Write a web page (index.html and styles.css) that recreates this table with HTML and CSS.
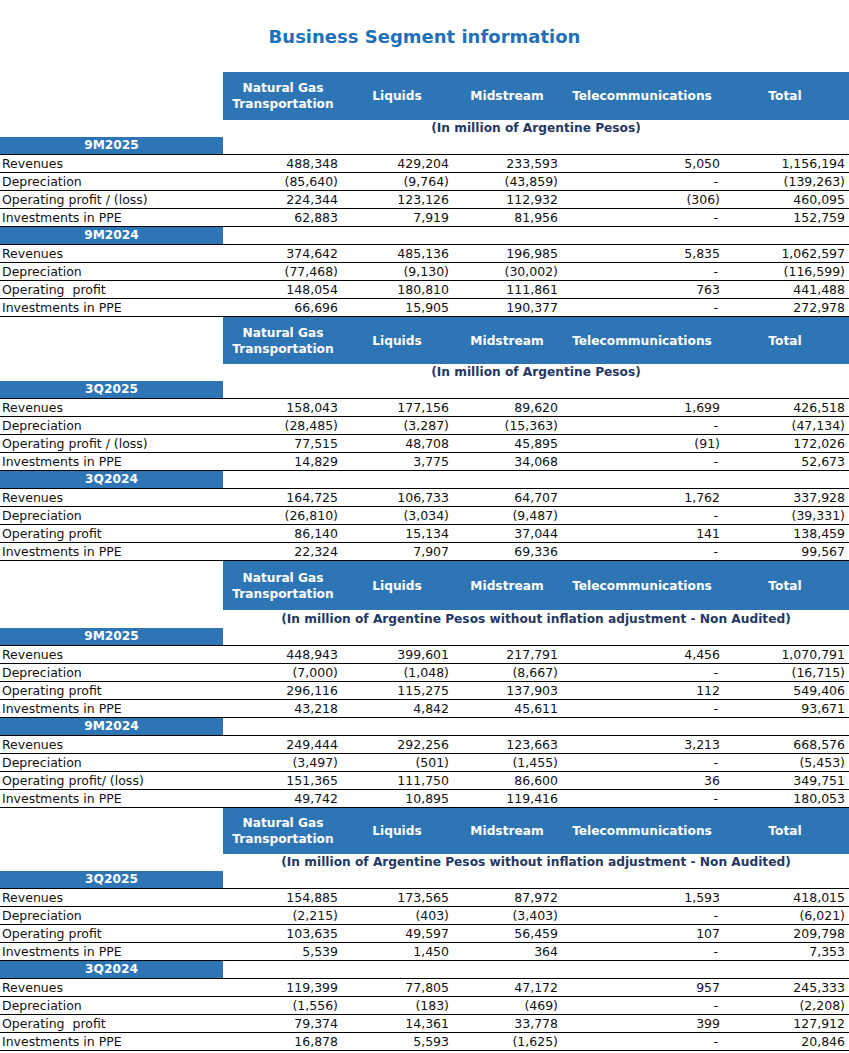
FILE: index.html
```html
<!DOCTYPE html>
<html lang="en">

<head>
    <meta charset="UTF-8">
    <meta name="viewport" content="width=device-width, initial-scale=1.0">
    <title>Business Segment information</title>
    <link rel="stylesheet" href="styles.css">
</head>

<body>
    <h1 class="page-title">Business Segment information</h1>

    <!-- 9M, adjusted -->
    <table class="segment head-48">
        <colgroup>
            <col class="c-name"><col class="c-gas"><col class="c-liq"><col class="c-mid"><col class="c-tel"><col class="c-tot">
        </colgroup>
        <tr class="head">
            <th class="blank"></th>
            <th>Natural Gas<br>Transportation</th>
            <th>Liquids</th>
            <th>Midstream</th>
            <th>Telecommunications</th>
            <th>Total</th>
        </tr>
        <tr class="unit">
            <td></td>
            <td colspan="5">(In million of Argentine Pesos)</td>
        </tr>
        <tr class="period">
            <td class="band">9M2025</td><td></td><td></td><td></td><td></td><td></td>
        </tr>
        <tr class="data"><td class="name">Revenues</td><td>488,348</td><td>429,204</td><td>233,593</td><td>5,050</td><td>1,156,194</td></tr>
        <tr class="data"><td class="name">Depreciation</td><td>(85,640)</td><td>(9,764)</td><td>(43,859)</td><td class="nil">-</td><td>(139,263)</td></tr>
        <tr class="data"><td class="name">Operating profit / (loss)</td><td>224,344</td><td>123,126</td><td>112,932</td><td>(306)</td><td>460,095</td></tr>
        <tr class="data"><td class="name">Investments in PPE</td><td>62,883</td><td>7,919</td><td>81,956</td><td class="nil">-</td><td>152,759</td></tr>
        <tr class="period">
            <td class="band">9M2024</td><td></td><td></td><td></td><td></td><td></td>
        </tr>
        <tr class="data"><td class="name">Revenues</td><td>374,642</td><td>485,136</td><td>196,985</td><td>5,835</td><td>1,062,597</td></tr>
        <tr class="data"><td class="name">Depreciation</td><td>(77,468)</td><td>(9,130)</td><td>(30,002)</td><td class="nil">-</td><td>(116,599)</td></tr>
        <tr class="data"><td class="name">Operating&nbsp; profit</td><td>148,054</td><td>180,810</td><td>111,861</td><td>763</td><td>441,488</td></tr>
        <tr class="data"><td class="name">Investments in PPE</td><td>66,696</td><td>15,905</td><td>190,377</td><td class="nil">-</td><td>272,978</td></tr>
    </table>

    <!-- 3Q, adjusted -->
    <table class="segment head-47">
        <colgroup>
            <col class="c-name"><col class="c-gas"><col class="c-liq"><col class="c-mid"><col class="c-tel"><col class="c-tot">
        </colgroup>
        <tr class="head">
            <th class="blank"></th>
            <th>Natural Gas<br>Transportation</th>
            <th>Liquids</th>
            <th>Midstream</th>
            <th>Telecommunications</th>
            <th>Total</th>
        </tr>
        <tr class="unit">
            <td></td>
            <td colspan="5">(In million of Argentine Pesos)</td>
        </tr>
        <tr class="period">
            <td class="band">3Q2025</td><td></td><td></td><td></td><td></td><td></td>
        </tr>
        <tr class="data"><td class="name">Revenues</td><td>158,043</td><td>177,156</td><td>89,620</td><td>1,699</td><td>426,518</td></tr>
        <tr class="data"><td class="name">Depreciation</td><td>(28,485)</td><td>(3,287)</td><td>(15,363)</td><td class="nil">-</td><td>(47,134)</td></tr>
        <tr class="data"><td class="name">Operating profit / (loss)</td><td>77,515</td><td>48,708</td><td>45,895</td><td>(91)</td><td>172,026</td></tr>
        <tr class="data"><td class="name">Investments in PPE</td><td>14,829</td><td>3,775</td><td>34,068</td><td class="nil">-</td><td>52,673</td></tr>
        <tr class="period">
            <td class="band">3Q2024</td><td></td><td></td><td></td><td></td><td></td>
        </tr>
        <tr class="data"><td class="name">Revenues</td><td>164,725</td><td>106,733</td><td>64,707</td><td>1,762</td><td>337,928</td></tr>
        <tr class="data"><td class="name">Depreciation</td><td>(26,810)</td><td>(3,034)</td><td>(9,487)</td><td class="nil">-</td><td>(39,331)</td></tr>
        <tr class="data"><td class="name">Operating profit</td><td>86,140</td><td>15,134</td><td>37,044</td><td>141</td><td>138,459</td></tr>
        <tr class="data"><td class="name">Investments in PPE</td><td>22,324</td><td>7,907</td><td>69,336</td><td class="nil">-</td><td>99,567</td></tr>
    </table>

    <!-- 9M, historical -->
    <table class="segment head-49">
        <colgroup>
            <col class="c-name"><col class="c-gas"><col class="c-liq"><col class="c-mid"><col class="c-tel"><col class="c-tot">
        </colgroup>
        <tr class="head">
            <th class="blank"></th>
            <th>Natural Gas<br>Transportation</th>
            <th>Liquids</th>
            <th>Midstream</th>
            <th>Telecommunications</th>
            <th>Total</th>
        </tr>
        <tr class="unit">
            <td></td>
            <td colspan="5">(In million of Argentine Pesos without inflation adjustment - Non Audited)</td>
        </tr>
        <tr class="period">
            <td class="band">9M2025</td><td></td><td></td><td></td><td></td><td></td>
        </tr>
        <tr class="data"><td class="name">Revenues</td><td>448,943</td><td>399,601</td><td>217,791</td><td>4,456</td><td>1,070,791</td></tr>
        <tr class="data"><td class="name">Depreciation</td><td>(7,000)</td><td>(1,048)</td><td>(8,667)</td><td class="nil">-</td><td>(16,715)</td></tr>
        <tr class="data"><td class="name">Operating profit</td><td>296,116</td><td>115,275</td><td>137,903</td><td>112</td><td>549,406</td></tr>
        <tr class="data"><td class="name">Investments in PPE</td><td>43,218</td><td>4,842</td><td>45,611</td><td class="nil">-</td><td>93,671</td></tr>
        <tr class="period">
            <td class="band">9M2024</td><td></td><td></td><td></td><td></td><td></td>
        </tr>
        <tr class="data"><td class="name">Revenues</td><td>249,444</td><td>292,256</td><td>123,663</td><td>3,213</td><td>668,576</td></tr>
        <tr class="data"><td class="name">Depreciation</td><td>(3,497)</td><td>(501)</td><td>(1,455)</td><td class="nil">-</td><td>(5,453)</td></tr>
        <tr class="data"><td class="name">Operating profit/ (loss)</td><td>151,365</td><td>111,750</td><td>86,600</td><td>36</td><td>349,751</td></tr>
        <tr class="data"><td class="name">Investments in PPE</td><td>49,742</td><td>10,895</td><td>119,416</td><td class="nil">-</td><td>180,053</td></tr>
    </table>

    <!-- 3Q, historical -->
    <table class="segment head-46">
        <colgroup>
            <col class="c-name"><col class="c-gas"><col class="c-liq"><col class="c-mid"><col class="c-tel"><col class="c-tot">
        </colgroup>
        <tr class="head">
            <th class="blank"></th>
            <th>Natural Gas<br>Transportation</th>
            <th>Liquids</th>
            <th>Midstream</th>
            <th>Telecommunications</th>
            <th>Total</th>
        </tr>
        <tr class="unit">
            <td></td>
            <td colspan="5">(In million of Argentine Pesos without inflation adjustment - Non Audited)</td>
        </tr>
        <tr class="period">
            <td class="band">3Q2025</td><td></td><td></td><td></td><td></td><td></td>
        </tr>
        <tr class="data"><td class="name">Revenues</td><td>154,885</td><td>173,565</td><td>87,972</td><td>1,593</td><td>418,015</td></tr>
        <tr class="data"><td class="name">Depreciation</td><td>(2,215)</td><td>(403)</td><td>(3,403)</td><td class="nil">-</td><td>(6,021)</td></tr>
        <tr class="data"><td class="name">Operating profit</td><td>103,635</td><td>49,597</td><td>56,459</td><td>107</td><td>209,798</td></tr>
        <tr class="data"><td class="name">Investments in PPE</td><td>5,539</td><td>1,450</td><td>364</td><td class="nil">-</td><td>7,353</td></tr>
        <tr class="period">
            <td class="band">3Q2024</td><td></td><td></td><td></td><td></td><td></td>
        </tr>
        <tr class="data"><td class="name">Revenues</td><td>119,399</td><td>77,805</td><td>47,172</td><td>957</td><td>245,333</td></tr>
        <tr class="data"><td class="name">Depreciation</td><td>(1,556)</td><td>(183)</td><td>(469)</td><td class="nil">-</td><td>(2,208)</td></tr>
        <tr class="data"><td class="name">Operating&nbsp; profit</td><td>79,374</td><td>14,361</td><td>33,778</td><td>399</td><td>127,912</td></tr>
        <tr class="data"><td class="name">Investments in PPE</td><td>16,878</td><td>5,593</td><td>(1,625)</td><td class="nil">-</td><td>20,846</td></tr>
    </table>
</body>

</html>
```

FILE: styles.css
```css
:root {
    --band: #2e75b6;
    --title: #1f70b8;
    --navy: #1f3864;
    --ink: #111111;
}

body {
    font-family: 'DejaVu Sans', Verdana, sans-serif;
    font-size: 12.5px;
    margin: 0;
    padding: 0;
    background-color: #fff;
    color: var(--ink);
}

.page-title {
    font-family: 'DejaVu Sans', Tahoma, sans-serif;
    font-size: 18px;
    font-weight: bold;
    color: var(--title);
    text-align: center;
    line-height: 22px;
    height: 46px;
    margin: 0;
    padding-top: 26px;
}

.segment {
    width: 849px;
    border-collapse: collapse;
    table-layout: fixed;
}

.c-name { width: 223px; }
.c-gas { width: 120px; }
.c-liq { width: 108px; }
.c-mid { width: 112px; }
.c-tel { width: 158px; }
.c-tot { width: 128px; }

.segment td,
.segment th {
    padding: 0;
    white-space: nowrap;
}

/* column header band */
.head th {
    background-color: var(--band);
    color: #fff;
    font-size: 12.2px;
    font-weight: bold;
    line-height: 16px;
    text-align: center;
    vertical-align: middle;
}

.head th.blank {
    background-color: #fff;
}

.head-48 .head th { height: 48px; }
.head-47 .head th { height: 47px; }
.head-49 .head th { height: 49px; }
.head-46 .head th { height: 46px; }

.unit td {
    font-size: 12.2px;
    line-height: 17px;
    text-align: center;
    font-weight: bold;
    color: var(--navy);
}

.head-49 .unit td { line-height: 18px; }

.period td {
    line-height: 17px;
    border-bottom: 1px solid #000;
}

.period td.band {
    background-color: var(--band);
    color: #fff;
    font-size: 12.2px;
    font-weight: bold;
    text-align: center;
}

.data td {
    line-height: 17px;
    border-bottom: 1px solid #000;
    text-align: right;
}

.data td:nth-child(2) { padding-right: 5px; }
.data td:nth-child(3) { padding-right: 2px; }
.data td:nth-child(4) { padding-right: 5px; }
.data td:nth-child(5) { padding-right: 1px; }
.data td:nth-child(6) { padding-right: 4px; }

.data td.name {
    text-align: left;
    padding-left: 2px;
}

.data td.nil {
    padding-right: 3px;
}
```
